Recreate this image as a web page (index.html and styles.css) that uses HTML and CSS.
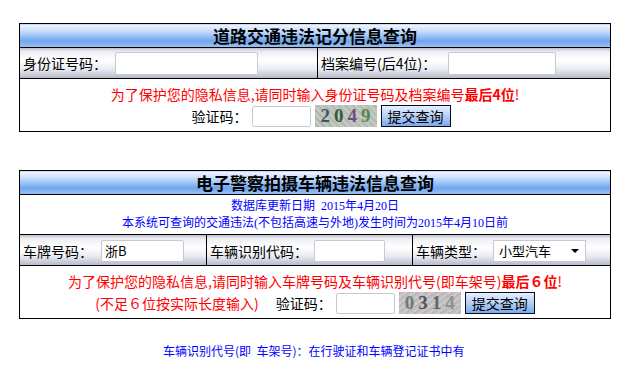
FILE: index.html
```html
<!DOCTYPE html>
<html lang="zh-CN">
<head>
  <meta charset="UTF-8">
  <title>交通违法信息查询</title>
  <link rel="stylesheet" href="styles.css">
</head>
<body>
  <table class="consulta">
    <tr>
      <th colspan="2" class="titulo">道路交通违法记分信息查询</th>
    </tr>
    <tr class="campos">
      <td class="c-id"><span class="rotulo">身份证号码：</span><input type="text" class="in-id"></td>
      <td class="c-doc"><span class="rotulo">档案编号(后4位)：</span><input type="text" class="in-doc"></td>
    </tr>
    <tr>
      <td colspan="2" class="aviso">
        <p class="vermelho">为了保护您的隐私信息,请同时输入身份证号码及档案编号<b>最后4位</b>!</p>
        <div class="linha-codigo primeira">
          <span class="rotulo">验证码：</span>
          <input type="text" class="in-codigo">
          <span class="captcha verde"><i class="d1">2</i><i class="d2">0</i><i class="d3">4</i><i class="d4">9</i></span>
          <button class="enviar">提交查询</button>
        </div>
      </td>
    </tr>
  </table>

  <table class="consulta segunda">
    <tr>
      <th colspan="3" class="titulo">电子警察拍摄车辆违法信息查询</th>
    </tr>
    <tr>
      <td colspan="3" class="info">
        <p>数据库更新日期&nbsp; 2015年4月20日</p>
        <p>本系统可查询的交通违法(不包括高速与外地)发生时间为2015年4月10日前</p>
      </td>
    </tr>
    <tr class="campos">
      <td class="c-placa"><span class="rotulo">车牌号码：</span><input type="text" class="in-placa" value="浙B"></td>
      <td class="c-chassi"><span class="rotulo">车辆识别代码：</span><input type="text" class="in-chassi"></td>
      <td class="c-tipo"><span class="rotulo">车辆类型：</span><div class="seletor"><span>小型汽车</span><span class="seta"></span></div></td>
    </tr>
    <tr>
      <td colspan="3" class="aviso">
        <p class="vermelho">为了保护您的隐私信息,请同时输入车牌号码及车辆识别代号(即车架号)<b>最后６位</b>!</p>
        <div class="linha-codigo">
          <span class="vermelho nota">(不足６位按实际长度输入)</span>
          <span class="rotulo">验证码：</span>
          <input type="text" class="in-codigo">
          <span class="captcha rosa"><i class="d5">0</i><i class="d6">3</i><i class="d7">1</i><i class="d8">4</i></span>
          <button class="enviar">提交查询</button>
        </div>
      </td>
    </tr>
  </table>

  <p class="rodape">车辆识别代号(即&nbsp; 车架号)：在行驶证和车辆登记证书中有</p>
</body>
</html>
```

FILE: styles.css
```css
body {
  margin: 0;
  padding-top: 23px;
  font-family: "Noto Sans CJK SC", sans-serif;
  font-size: 14px;
  color: #000;
  background: #fff;
}
.consulta {
  width: 592px;
  margin-left: 19px;
  border-collapse: collapse;
  border: 1px solid #000;
}
.segunda {
  margin-top: 38px;
}
.consulta td, .consulta th {
  padding: 0;
  border: 1px solid #000;
}
.titulo {
  height: 23px;
  font-size: 17px;
  font-weight: bold;
  line-height: 23px;
  text-align: center;
  background: linear-gradient(#f2f7ff, #c6dcfa 30%, #6fa6ef 72%, #9ec2f3);
}
.campos td {
  height: 30px;
  background: linear-gradient(#c9cad4, #f0f0f4 12%, #ffffff 40%, #e9eaf0 70%, #b3b7c8);
  white-space: nowrap;
}
.rotulo {
  vertical-align: middle;
}
.campos .rotulo {
  padding-left: 3px;
}
input {
  font-family: "Noto Sans CJK SC", sans-serif;
  font-size: 13px;
  height: 23px;
  box-sizing: border-box;
  padding: 0 3px;
  border: 1px solid #c5c9d3;
  border-radius: 2px;
  background: #fff;
  vertical-align: middle;
}
.c-id { width: 297px; }
.in-id { width: 143px; margin-left: 8px; }
.in-doc { width: 108px; margin-left: 12px; }
.c-placa { width: 186px; }
.c-chassi { width: 205px; }
.in-placa { width: 83px; margin-left: 8px; height: 22px; }
.in-chassi { width: 71px; margin-left: 6px; height: 22px; }
.seletor {
  display: inline-flex;
  align-items: center;
  justify-content: space-between;
  width: 93px;
  height: 22px;
  box-sizing: border-box;
  margin-left: 7px;
  padding: 0 6px 0 5px;
  border: 1px solid #c5c9d3;
  background: #fff;
  font-size: 13px;
  vertical-align: middle;
}
.seta {
  width: 0;
  height: 0;
  border-left: 4px solid transparent;
  border-right: 4px solid transparent;
  border-top: 4px solid #000;
}
.aviso {
  height: 51px;
  text-align: center;
}
p {
  margin: 0;
}
.vermelho {
  color: #f00;
}
.aviso p {
  line-height: 22px;
  padding-top: 4px;
}
.linha-codigo {
  display: flex;
  justify-content: center;
  align-items: center;
  gap: 4px;
  padding-bottom: 4px;
}
.primeira {
  padding-left: 12px;
}
.nota {
  margin-right: 13px;
}
.in-codigo {
  width: 59px;
  height: 21px;
}
.captcha {
  display: inline-flex;
  align-items: center;
  justify-content: center;
  gap: 4px;
  width: 62px;
  height: 22px;
  font-family: "Liberation Serif", serif;
  font-size: 19px;
  font-weight: bold;
}
.captcha i {
  font-style: normal;
}
.verde {
  background: repeating-linear-gradient(45deg, #b9c1b8 0 2px, #a9b3aa 2px 3px, #c5cbc2 3px 5px);
}
.rosa {
  background: repeating-linear-gradient(-35deg, #c3bcc0 0 2px, #afb5b0 2px 3px, #d0c6cc 3px 5px);
}
.d1 { color: #3d5560; }
.d2 { color: #375a3f; }
.d3 { color: #6f4c86; }
.d4 { color: #5e8451; }
.d5 { color: #6f7b70; }
.d6 { color: #4e5654; }
.d7 { color: #5a6a62; }
.d8 { color: #8a9688; }
.enviar {
  width: 70px;
  height: 22px;
  padding: 0;
  font-family: "Noto Sans CJK SC", sans-serif;
  font-size: 14px;
  color: #000;
  border: 1px solid #0a0a1e;
  background: linear-gradient(#e6efff, #bcd3f6 45%, #79a9ec);
}
.info {
  height: 39px;
  text-align: center;
  color: #00f;
  font-family: "Liberation Serif", "Noto Sans CJK SC", serif;
  font-size: 12px;
  line-height: 17px;
  padding-top: 2px;
}
.rodape {
  margin-top: 23px;
  padding-left: 163px;
  color: #00f;
  font-size: 12px;
}
```
